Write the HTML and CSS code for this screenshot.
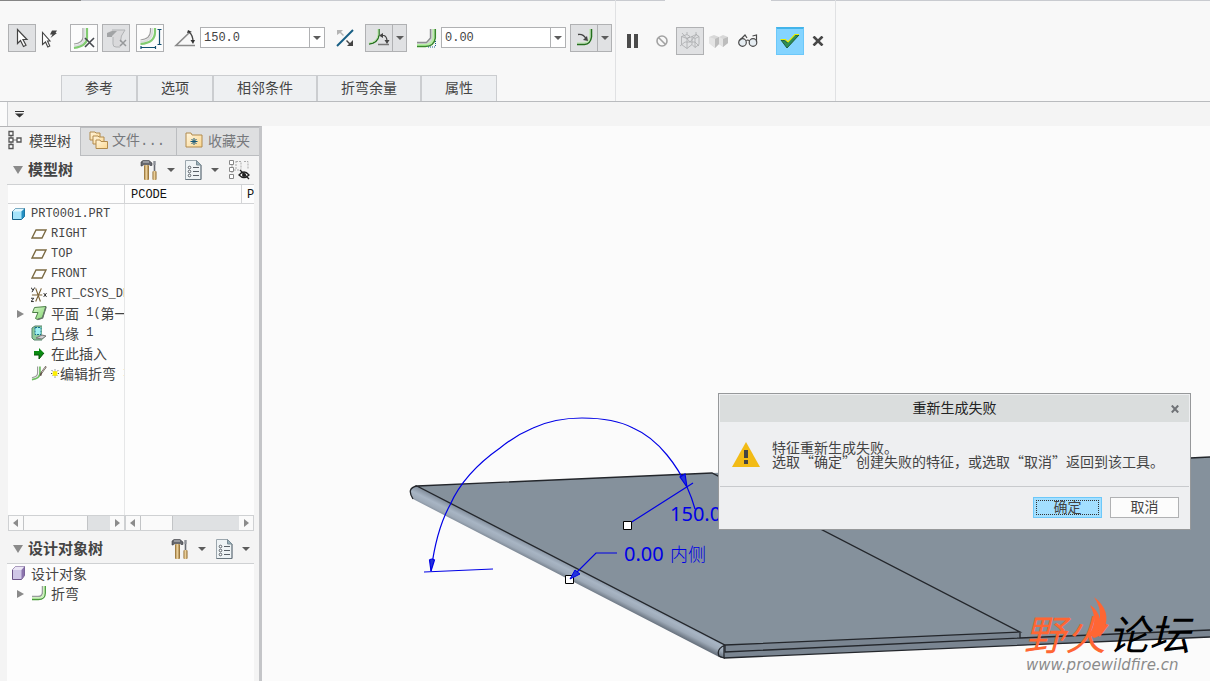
FILE: index.html
```html
<!DOCTYPE html>
<html lang="zh-CN">
<head>
<meta charset="utf-8">
<title>折弯</title>
<link rel="stylesheet" href="styles.css">
</head>
<body>
<svg class="defs" width="0" height="0" aria-hidden="true">
  <defs>
    <linearGradient id="wood" x1="0" x2="1"><stop offset="0" stop-color="#8a6428"/><stop offset=".45" stop-color="#f3d9a4"/><stop offset="1" stop-color="#8a6428"/></linearGradient>
    <linearGradient id="folder" x1="0" y1="0" x2="1" y2="1"><stop offset="0" stop-color="#fff6e0"/><stop offset="1" stop-color="#fbd78f"/></linearGradient>
    <linearGradient id="green" x1="0" y1="0" x2="1" y2="1"><stop offset="0" stop-color="#dcf8cf"/><stop offset="1" stop-color="#7fd46c"/></linearGradient>
    <symbol id="hammer" viewBox="0 0 18 20">
      <path d="M1 2 L3 .5 H9 L12 3 V5.500 H10 L9 4.500 H4 L2 6 H1 Z" fill="#66686e" stroke="#3c3e44" stroke-width=".6"/>
      <path d="M3 2h6" stroke="#c5c8ce"/>
      <rect x="4" y="5" width="5" height="15" rx="1" fill="url(#wood)"/>
      <path d="M14.500 1v11" stroke="#666a72" stroke-width="1.600"/><path d="M13.500 1h2v4h-2z" fill="#8c9097"/>
      <rect x="12.500" y="11" width="4" height="9" rx="1" fill="url(#wood)"/>
    </symbol>
    <symbol id="sheet" viewBox="0 0 17 20">
      <path d="M.5.5h11l4.500 4.500v14.500H.5z" fill="#eef3f5" stroke="#9ba6ad"/>
      <path d="M16 5v14.500H.5" fill="none" stroke="#68757e"/>
      <path d="M11.500.5 16 5h-4.500z" fill="#9ab1ba" stroke="#7b8d96"/>
      <path d="M8 7.500h6M8 11.500h6M8 15.500h6" stroke="#596067"/>
      <g fill="#fff" stroke="#596067"><circle cx="4.500" cy="7.500" r="1.300"/><circle cx="4.500" cy="11.500" r="1.300"/><circle cx="4.500" cy="15.500" r="1.300"/></g>
    </symbol>
    <symbol id="caret" viewBox="0 0 8 4"><path d="M0 0h8L4 4z" fill="#5c5c5c"/></symbol>
    <symbol id="plane" viewBox="0 0 16 16"><path d="M5 4h10l-4 8H1z" fill="none" stroke="#7b6a42" stroke-width="1.400"/></symbol>
    <symbol id="bend" viewBox="0 0 16 16">
      <path d="M11.500 1v6q0 4.500-4.500 4.500H1" fill="none" stroke="#9a9c9e" stroke-width="1.500"/>
      <path d="M13 1v6q0 6-6 6H1" fill="none" stroke="#c7f5b3" stroke-width="1.500"/>
      <path d="M14.300 1v7q0 6.500-7 6.500H1" fill="none" stroke="#4a9b3b" stroke-width="1.300"/>
    </symbol>
  </defs>
</svg>

<header class="ribbon">
  <div class="ribbon-group ribbon-group--feature">
    <div class="tools">
      <button class="tool tool--on" aria-label="选择"><svg width="26" height="26" viewBox="0 0 26 26"><path d="M8.500 4.500v14l3-3 3 6 2.500-1.300-3-5.700h4z" fill="#fff" stroke="#444" stroke-width="1.200"/></svg></button>
      <button class="glyph glyph--pick" aria-label="快速选择"><svg width="26" height="26" viewBox="0 0 26 26"><path d="M2.500 7.500v12l3-2.500 2.300 5 2-1-2.300-5H10z" fill="#fff" stroke="#444" stroke-width="1.100"/><path d="M12 5.500h5l-1.500 2.500H17l-6.500 5 2-3.500H10z" fill="#444"/></svg></button>
      <button class="tool" aria-label="折弯线外侧"><svg width="26" height="26" viewBox="0 0 26 26"><path d="M12 3v9q0 6-9 7" fill="none" stroke="#9c9c9c" stroke-width="1.200"/><path d="M13.500 3v10q0 7-10.500 8" fill="none" stroke="#dcdde0" stroke-width="1.800"/><path d="M16 3v10q0 8-13 10" fill="none" stroke="#82cb71" stroke-width="2.200"/><path d="M14 13l9 9M23 13l-9 9" stroke="#46494e" stroke-width="1.600"/></svg></button>
      <button class="tool tool--on" aria-label="固定侧" disabled><svg width="26" height="26" viewBox="0 0 26 26"><path d="M9 5h13q-6 6-4 17h-6q-2-3-2-10H4V8z" fill="#d9d9db"/><path d="M9 5h13q-5 6-4.500 12M10 12v7q0 3 3 3h4" fill="none" stroke="#b0b2b4"/><path d="M4 8l5-2h5l-5 5v1H4z" fill="#a2a4a6"/><path d="M17 15l6 6M23 15l-6 6" stroke="#96989a" stroke-width="1.500"/></svg></button>
      <button class="tool tool--apart" aria-label="标注折弯"><svg width="26" height="26" viewBox="0 0 26 26"><path d="M13.500 3v3q0 8-10 9" fill="none" stroke="#9c9c9c" stroke-width="1.200"/><path d="M15.300 3v3q0 10-12 11" fill="none" stroke="#dadbdc" stroke-width="1.800"/><path d="M18 3v4q0 11-14.500 12" fill="none" stroke="#82cb71" stroke-width="2.200"/><path d="M20.500 4.500h4M22.500 4v15M20.500 19.500h4M4 21v3M4 22.500h15M18.500 21v3" stroke="#114e70" stroke-width="1.200"/></svg></button>
      <label class="glyph glyph--angle" for="angle" title="角度"><svg width="22" height="20" viewBox="0 0 22 20"><path d="M16 4 2 17.500h19" fill="none" stroke="#8b8b8b" stroke-width="1.600"/><path d="M15 4q4 3 4 10" fill="none" stroke="#444" stroke-width="1.300"/><path d="M13 5l1-3 4 2zM16.500 12h4.500l-2 4z" fill="#333"/></svg></label>
      <div class="combo"><input id="angle" type="text" value="150.0"><button aria-label="角度列表"><svg width="8" height="4"><use href="#caret"/></svg></button></div>
      <button class="glyph glyph--flip" aria-label="反向"><svg width="18" height="18" viewBox="0 0 18 18"><path d="M1 17 17 1" stroke="#175e84" stroke-width="2"/><path d="M1 1h6L5 3l3 3-1 1-3-3-3 2z" fill="#b5b5b5"/><path d="M17 17h-6l2-2-3-3 1-1 3 3 3-3z" fill="#444"/></svg></button>
      <div class="split"><button aria-label="内部角度"><svg width="26" height="26" viewBox="0 0 26 26"><path d="M13 4v6q-1 8-10 9" fill="none" stroke="#236f1c" stroke-width="1.500"/><path d="M12 4v6q-1 7-9 8" fill="none" stroke="#b8e9a8"/><path d="M12 19.500h11" stroke="#777" stroke-width="1.500"/><path d="M15 10.500h3q3 1 3 6" fill="none" stroke="#444" stroke-width="1.200"/><path d="M13 10.500l4-2.500v5zM18.500 15h5l-2.500 4z" fill="#444"/></svg></button><button class="split-arrow" aria-label="角度选项"><svg width="8" height="4"><use href="#caret"/></svg></button></div>
      <label class="glyph glyph--radius" for="radius" title="半径"><svg width="20" height="20" viewBox="0 0 20 20"><path d="M14 1v9l-4 5H0v3h10q8-1 8-9V1z" fill="#d5d6d7"/><path d="M13.500 1v9l-4 4.500H0" fill="none" stroke="#8b8d8f" stroke-width="1.400"/><path d="M16.500 1v9q-1 6-8 7H0" fill="none" stroke="#b7f0a4" stroke-width="1.800"/><path d="M18.300 1v9q-1 8-10 8.500H0" fill="none" stroke="#388a2a" stroke-width="1.500"/><path d="M11 19h8M18.500 13v6" stroke="#175e84" stroke-dasharray="1 1"/></svg></label>
      <div class="combo"><input id="radius" type="text" value="0.00"><button aria-label="半径列表"><svg width="8" height="4"><use href="#caret"/></svg></button></div>
      <div class="split"><button aria-label="内侧半径"><svg width="26" height="26" viewBox="0 0 26 26"><path d="M19 4v7q0 6-6 7H6" fill="none" stroke="#b8e9a8" stroke-width="1.200"/><path d="M20.500 4v8q-1 7-7 7.500H6" fill="none" stroke="#236f1c" stroke-width="1.500"/><path d="M7 9.500q5-1 8 4" fill="none" stroke="#444" stroke-width="1.300"/><path d="M17 16l-5-1 4-4z" fill="#444"/></svg></button><button class="split-arrow" aria-label="半径选项"><svg width="8" height="4"><use href="#caret"/></svg></button></div>
    </div>
    <nav class="ribbon-tabs">
      <button>参考</button><button>选项</button><button>相邻条件</button><button>折弯余量</button><button>属性</button>
    </nav>
  </div>
  <div class="ribbon-group ribbon-group--control">
    <button class="glyph glyph--control" aria-label="暂停"><svg width="12" height="14"><path d="M0 0h4v14H0zM7 0h4v14H7z" fill="#4b4b4b"/></svg></button>
    <button class="glyph glyph--control" aria-label="无预览"><svg width="12" height="12" viewBox="0 0 12 12"><circle cx="6" cy="6" r="5" fill="none" stroke="#a2a2a2" stroke-width="1.600"/><path d="M2.500 2.500l7 7" stroke="#a2a2a2" stroke-width="1.600"/></svg></button>
    <button class="tool tool--on" aria-label="分离"><svg width="22" height="20" viewBox="0 0 22 20"><path d="M2.500 5.500 8 3.500l3 2-3 2zM2.500 5.500v8l5.500 4v-10M8 17.500l5-4v-8l-5 2M13 5.500l4-2 3 2-4 2zM16 7.500v9l-3-3M16 16.500l4-3v-8M1 15l5-4h5l7-8M3 2l8 9h5l4 4M8 3.500V1M17 3.500V1" fill="none" stroke="#a9abad" stroke-width=".8"/></svg></button>
    <button class="glyph glyph--control glyph--verify" aria-label="连接"><svg width="19" height="16" viewBox="0 0 19 16"><path d="M0 4l5-2 5 2 4-2 5 2v6l-5 4-4-3-4 4-6-5z" fill="#d8d8d8"/><path d="M6 6l4-2v7l-4 4zM14 6l5-2v6l-5 4z" fill="#bdbdbd"/><path d="M0 4l6 2v9l-6-5zM10 4l4 2v8l-4-3z" fill="#e4e4e4"/></svg></button>
    <button class="glyph glyph--control" aria-label="预览"><svg width="20" height="14" viewBox="0 0 20 14"><g fill="#e6edf2" stroke="#4a4a4a" stroke-width="1.200"><circle cx="4.500" cy="8.500" r="3.800"/><circle cx="15" cy="8.500" r="3.800"/></g><path d="M1 7 7 1l2 3M8.500 7q1-2 3 0M18.500 8V1l-4 1" fill="none" stroke="#4a4a4a" stroke-width="1.200"/></svg></button>
    <button class="tool tool--ok" aria-label="确认特征"><svg width="22" height="18" viewBox="0 0 22 18"><path d="M2 8l5 1 1 2 8-8h4L8 16z" fill="#2d8f58" stroke="#205e38"/><path d="M1.500 7.500h5L9 10l7-7.500h4" fill="none" stroke="#e8ee00" stroke-width="1.200"/></svg></button>
    <button class="glyph glyph--cancel" aria-label="取消特征"><svg width="12" height="10" viewBox="0 0 12 10"><path d="M1.500.5l9 9M10.500.5l-9 9" stroke="#484848" stroke-width="2.600"/></svg></button>
  </div>
</header>

<div class="quickbar"><button aria-label="更多命令"><svg width="9" height="7"><path d="M0 0h9v1H0zM0 2.500h9l-4.500 4z" fill="#333"/></svg></button></div>

<main class="workspace">
  <aside class="navigator">
    <nav class="nav-tabs">
      <button class="nav-tab nav-tab--active"><svg width="14" height="20" viewBox="0 0 14 20"><path d="M3 6v8M5 10h4" stroke="#777"/><g fill="#fff" stroke="#555" stroke-width="1.300"><path d="M1 1.500h4v4H1zM1 8h4v4H1zM9 8h4v4H9zM1 14.500h4v4H1z"/></g></svg>模型树</button>
      <button class="nav-tab"><svg width="20" height="20" viewBox="0 0 20 20"><g fill="url(#folder)" stroke="#b18a4c"><path d="M1 10V2h5l1 1h4v7z"/><path d="M4 14V6h5l1 1h5v7z"/><path d="M7 18.500V10h4l1 1.500h6.500v7z"/></g></svg><span>文件<span class="code code--tab">...</span></span></button>
      <button class="nav-tab"><svg width="18" height="16" viewBox="0 0 18 16"><path d="M1 15V1h5l1 2h10v12z" fill="url(#folder)" stroke="#b18a4c"/><path d="M9 6v7M5.500 9.500h7M6.500 7l5 5M11.500 7l-5 5" stroke="#155678"/></svg>收藏夹</button>
    </nav>

    <section class="panel">
      <div class="panel-head">
        <svg class="fold" width="10" height="8"><path d="M0 0h10L5 8z" fill="#8a8a8a"/></svg>
        <h2>模型树</h2>
        <button aria-label="设置"><svg width="18" height="20"><use href="#hammer"/></svg><svg width="8" height="4"><use href="#caret"/></svg></button>
        <button aria-label="显示"><svg width="17" height="20"><use href="#sheet"/></svg><svg width="8" height="4"><use href="#caret"/></svg></button>
        <button aria-label="隐藏"><svg width="21" height="20" viewBox="0 0 21 20"><path d="M3 5v9M5 10h5M7 1.500h5v8M15 1.500h4v8M7 1v8" fill="none" stroke="#aaa" stroke-dasharray="2 1"/><g fill="#fff" stroke="#888"><path d="M.5.5h4v4h-4zM.5 7.500h4v4h-4zM.5 14.500h4v4h-4z"/></g><path d="M10 15q5-6 10 0-5 5-10 0z" fill="#fff" stroke="#222" stroke-width="1.300"/><circle cx="15" cy="15" r="2" fill="#222"/><path d="M11 10l9 9" stroke="#222" stroke-width="1.300"/></svg></button>
      </div>
      <div class="columns">
        <div class="column column--name">
          <div class="column-head"></div>
          <ul class="tree">
            <li class="root"><svg width="16" height="16" viewBox="0 0 16 16"><path d="M1.500 5.500l3-3h9v8l-3 3h-9z" fill="#a5e4fb" stroke="#155f86"/><path d="M1.500 5.500l3-3h9l-3 3z" fill="#e1f7ff"/><path d="M10.500 5.500l3-3v8l-3 3z" fill="#258fc2"/></svg><span class="code">PRT0001.PRT</span></li>
            <li><svg width="16" height="16"><use href="#plane"/></svg><span class="code">RIGHT</span></li>
            <li><svg width="16" height="16"><use href="#plane"/></svg><span class="code">TOP</span></li>
            <li><svg width="16" height="16"><use href="#plane"/></svg><span class="code">FRONT</span></li>
            <li><svg width="16" height="17" viewBox="0 0 17 17"><path d="M1 9h11M5 2l5 14M11 2 5 16" stroke="#7b6235" stroke-width="1.200"/><path d="M0 1l2 3M4 1 1 6M0 12.500h3L0 16h3M13.500 7l3 4M16.500 7l-3 4" fill="none" stroke="#222"/></svg><span class="code">PRT_CSYS_DEF</span></li>
            <li class="branch local"><svg width="16" height="16" viewBox="0 0 16 16"><path d="M3.500 2.500 15 1.500 11.500 13l-5 1.500-2-1 2.500-6H1.500z" fill="url(#green)" stroke="#4c8046"/><path d="M15 2l-3.500 11-5 1.500" fill="none" stroke="#66756a" stroke-width="1.500"/></svg>平面<span class="code">&nbsp;1(</span>第一个</li>
            <li class="local"><svg width="16" height="16" viewBox="0 0 16 16"><path d="M1 3l3-2h7v9l4 1-4 4H3l-2-2z" fill="#8fcb9b"/><path d="M11 1H4L1 3v10l2 2h8" fill="none" stroke="#55806a"/><path d="M4 2.500h6v7H4z" fill="#9ef0f0" stroke="#166e8e" stroke-dasharray="2 1"/><path d="M5 13l6-3 4 1-4 3z" fill="#cfcfd2" stroke="#777"/></svg>凸缘<span class="code">&nbsp;1</span></li>
            <li class="local"><svg width="16" height="16" viewBox="0 0 16 16"><path d="M3 6h5V3l5 5-5 6v-4H3z" fill="#0a8b12"/><path d="M3 10h5v4l5-6" fill="none" stroke="#074c07"/></svg>在此插入</li>
            <li class="local"><svg width="16" height="16" viewBox="0 0 17 16"><path d="M7 1v7q0 4-6 5" fill="none" stroke="#999" stroke-width="1.200"/><path d="M9.500 1v7q0 6-8.500 7" fill="none" stroke="#70bd63" stroke-width="1.800"/><path d="M16 1l-5 7-1 3" fill="none" stroke="#5d4e43" stroke-width="1.800"/><path d="M15.500 1.500l-4 6" stroke="#eee" stroke-width=".7"/></svg><svg class="star" width="8" height="9" viewBox="0 0 9 9"><path d="M4.500 0v9M0 4.500h9M1 1l7 7M8 1 1 8" stroke="#222" stroke-dasharray="1 1"/><path d="M2 2h5v5H2z" fill="#fff000"/></svg>编辑折弯<span class="code">&nbsp;1</span></li>
          </ul>
          <div class="scrollbar"><i class="arrow arrow--left"></i><span class="thumb thumb--wide"></span><i class="arrow"></i></div>
        </div>
        <div class="column">
          <div class="cells">
            <div class="cell"><div class="column-head code">PCODE</div></div>
            <div class="cell cell--last"><div class="column-head code">P</div></div>
          </div>
          <div class="scrollbar"><i class="arrow arrow--left"></i><span class="thumb"></span><i class="arrow"></i></div>
        </div>
      </div>
    </section>

    <section class="panel panel--design">
      <div class="panel-head">
        <svg class="fold" width="10" height="8"><path d="M0 0h10L5 8z" fill="#8a8a8a"/></svg>
        <h2>设计对象树</h2>
        <button aria-label="设置"><svg width="18" height="20"><use href="#hammer"/></svg><svg width="8" height="4"><use href="#caret"/></svg></button>
        <button aria-label="显示"><svg width="17" height="20"><use href="#sheet"/></svg><svg width="8" height="4"><use href="#caret"/></svg></button>
      </div>
      <ul class="tree">
        <li class="root local"><svg width="16" height="16" viewBox="0 0 16 16"><path d="M1.500 5l3-3.500h9v9l-3 4h-9z" fill="#cfc6e6" stroke="#6b5387"/><path d="M1.500 5l3-3.500h9L10.500 5z" fill="#ebe6f6"/><path d="M10.500 5l3-3.500v9l-3 4z" fill="#8b74ad"/></svg>设计对象</li>
        <li class="branch local"><svg width="16" height="16"><use href="#bend"/></svg>折弯</li>
      </ul>
    </section>
  </aside>

  <section class="canvas">
    <svg class="scene" viewBox="262 126 948 555" role="img" aria-label="钣金折弯模型">
      <defs>
        <linearGradient id="tube" gradientUnits="userSpaceOnUse" x1="568" y1="563" x2="561" y2="577"><stop offset="0" stop-color="#8692a0"/><stop offset=".35" stop-color="#a8b5c4"/><stop offset=".65" stop-color="#9da9b7"/><stop offset="1" stop-color="#68727e"/></linearGradient>
      </defs>
      <path d="M712 473 1190 458 1210 457V637L724 658V645L417 486z" fill="#85919c"/>
      <path d="M725 645 1020 632V638L1210 630V637L724 658z" fill="#7a8591"/>
      <path d="M417 486 725 645V658H721L413 499Q406 488 417 486z" fill="url(#tube)"/>
      <g fill="none" stroke="#23262b" stroke-width="1.300">
        <path d="M417 486 712 473 1020 632 725 645zM725 645V652L1020 638V632M1020 638 1210 630M724 658 1210 637M1080 461.500 1190 458 1210 457"/>
        <path d="M413 499Q406 488 417 486M725 645Q716 649 719 656L724 658V645"/>
      </g>
      <g fill="none" stroke="#0000e6" stroke-width="1.200">
        <path d="M431 571C434 548 440 523 450 505C461 480 480 462 500 448C510 440 521 433 533 428C548 421 565 418 582 418C600 418 618 420 633 428C647 434 658 444 667 455C676 466 682 476 687 487Q692 498 695 509"/>
        <path d="M424 572 493 569M627 525 693 483M570 579 596 553H617"/>
        <path d="M431 571 429.500 560Q432 558 434.500 560zM687 487 680 477 685 474z" fill="#2434d8"/>
      </g>
      <path d="M623.500 521.500h8v8h-8zM565.500 575.500h8v8h-8z" fill="#fff" stroke="#000"/>
      <path d="M570 579 575 570 580 574z" fill="#2434d8" stroke="#0000e6"/>
      <text class="dimension" x="670" y="521">150.0</text>
      <text class="dimension" x="624" y="561">0.00 <tspan class="dimension-note" x="670">内侧</tspan></text>
      <text class="brand" x="1024" y="650"><tspan class="brand-fire">野火</tspan><tspan x="1108">论坛</tspan></text>
      <path d="M1094 597Q1112 611 1104 629Q1100 637 1094 638L1089 634Q1099 622 1090 605Q1098 610 1100 619Q1101 607 1094 597z" fill="#ff6633"/>
      <text class="brand-url" x="1026" y="670">www.proewildfire.cn</text>
    </svg>

    <div class="dialog" role="dialog" aria-labelledby="dialog-title">
      <div class="dialog-head">
        <h1 id="dialog-title">重新生成失败</h1>
        <button aria-label="关闭"><svg width="8" height="8" viewBox="0 0 8 8"><path d="M.8.5l6.400 7M7.200.5l-6.400 7" stroke="#707377" stroke-width="2"/></svg></button>
      </div>
      <div class="dialog-body">
        <svg width="28" height="25" viewBox="0 0 28 25"><path d="M14 0 28 25H0z" fill="#f2bb16"/><path d="M12 8h4v8h-4zM12 18h4v4h-4z" fill="#444"/></svg>
        <p>特征重新生成失败。<br>选取“确定”创建失败的特征，或选取“取消”返回到该工具。</p>
      </div>
      <div class="dialog-foot">
        <button class="primary">确定</button>
        <button>取消</button>
      </div>
    </div>
  </section>
</main>
</body>
</html>
```
FILE: styles.css
```css
* { box-sizing: border-box; }

body {
  margin: 0;
  height: 100vh;
  display: flex;
  flex-direction: column;
  overflow: hidden;
  background: #fbfbfb;
  color: #444;
  font: 14px/20px "Noto Sans CJK SC", sans-serif;
}

button {
  margin: 0;
  padding: 0;
  border: 0;
  background: none;
  color: inherit;
  font: inherit;
  display: flex;
  align-items: center;
  justify-content: center;
}

svg { display: block; flex: none; }
h1, h2, p, ul { margin: 0; padding: 0; }
ul { list-style: none; }
.defs { position: absolute; }
.code { font-family: "Liberation Mono", monospace; font-size: 12px; }
.code--tab { font-size: 14px; }

/* Ribbon */
.ribbon {
  display: flex;
  background: linear-gradient(90deg, #858585 81px, #c9cbd0 81px 665px, #f8f8f8 665px 771px, #c9cbd0 771px) top / 100% 1px no-repeat #f8f8f8;
  border-bottom: 1px solid #b9bbbe;
}
.ribbon-group { border-right: 1px solid #e0e1e3; }
.ribbon-group--feature { width: 616px; }
.tools { display: flex; align-items: center; gap: 4px; height: 75px; padding-left: 8px; }
.tool {
  width: 28px;
  height: 28px;
  border: 1px solid #b0b1b3;
  background: #fcfcfc;
}
.tool--on { background: #e0e1e3; }
.tool--apart { margin-left: 2px; }
.tool--ok { background: #84d4ff; border-color: #6cc8fa; border-top: 2px solid #43b4ea; }
.glyph { display: flex; align-items: center; justify-content: center; }
.glyph--pick { width: 26px; }
.glyph--angle { width: 28px; justify-content: flex-end; }
.glyph--flip { width: 32px; }
.glyph--radius { width: 26px; justify-content: flex-end; }
.combo {
  display: flex;
  width: 125px;
  height: 21px;
  border: 1px solid #b0b1b3;
  background: #fff;
}
.combo input {
  flex: 1;
  min-width: 0;
  border: 0;
  padding: 0 3px;
  background: none;
  color: #444;
  font: 12px "Liberation Mono", monospace;
}
.combo button { width: 15px; border-left: 1px solid #b0b1b3; }
.split { display: flex; width: 42px; height: 28px; border: 1px solid #b0b1b3; background: #e0e1e3; }
.split button { flex: 1; }
.split .split-arrow { flex: 0 0 14px; border-left: 1px solid #b0b1b3; }
.ribbon-tabs { display: flex; margin-left: 61px; }
.ribbon-tabs button {
  height: 26px;
  padding: 0 23px 4px;
  border: 1px solid #cbcdd0;
  border-bottom: 0;
  background: #eef0f2;
}
.ribbon-group--control { display: flex; align-items: center; width: 220px; height: 101px; padding: 0 0 20px 2px; }
.glyph--control { width: 29px; }
.tool--ok { margin-left: 14px; }
.glyph--cancel { width: 28px; }

.quickbar {
  display: flex;
  height: 24px;
  margin-left: 7px;
  padding-left: 7px;
  border-left: 1px solid #cbcdd0;
  background: #f4f4f4;
}

/* Navigator */
.workspace { flex: 1; display: flex; min-height: 0; }
.navigator {
  flex: none;
  display: flex;
  flex-direction: column;
  width: 262px;
  border-right: 3px solid #c4c5c8;
  border-top: 1px solid #b4b4b6;
  background: #f4f4f4;
}
.nav-tabs { display: grid; grid-template-columns: 80px 96px 1fr; height: 29px; }
.nav-tab {
  justify-content: flex-start;
  gap: 3px;
  padding: 0 0 3px 8px;
  border: 1px solid #bbbdc0;
  border-width: 1px 0 1px 1px;
  background: #dedfe0;
  color: #77797c;
}
.nav-tab--active { gap: 7px; border: 0; background: #f4f4f4; color: #444; }
.nav-tab:last-child { gap: 5px; }
.panel { display: flex; flex-direction: column; }
.panel-head {
  display: flex;
  align-items: center;
  gap: 10px;
  height: 29px;
  margin: 0 5px 0 7px;
  padding: 0 4px 0 6px;
  border-bottom: 1px solid #cfd1d3;
}
.panel-head h2 { flex: 1; padding-bottom: 2px; font-size: 15px; line-height: 20px; font-weight: 700; }
.fold { margin-right: -5px; }
.panel-head button { gap: 9px; }
.columns { display: grid; grid-template-columns: 117px 1fr; margin: 0 5px 0 8px; height: 346px; background: #fdfdfd; }
.column { display: flex; flex-direction: column; min-width: 0; }
.column--name .tree { border-right: 1px solid #e6e7e8; }
.column-head { height: 19px; padding-left: 6px; border-bottom: 1px solid #d3d4d6; color: #111; line-height: 20px; }
.column--name .column-head { border-right: 1px solid #d3d4d6; }
.cells { flex: 1; display: grid; grid-template-columns: 116px 1fr; overflow: hidden; }
.cell--last .column-head { border-left: 1px solid #d3d4d6; padding-left: 5px; }
.tree { flex: 1; overflow: hidden; }
.tree li { position: relative; display: flex; align-items: center; height: 20px; padding-left: 23px; white-space: nowrap; }
.tree .local { padding-bottom: 2px; }
.tree li > svg:first-child { margin-right: 4px; }
.tree .root { padding-left: 3px; }
.branch::before {
  content: "";
  position: absolute;
  left: 9px;
  top: 6px;
  border: solid transparent;
  border-width: 4px 0 4px 7px;
  border-left-color: #8a8a8a;
}
.star { margin-right: 1px; }
.scrollbar { display: flex; height: 16px; border: 1px solid #cfd1d3; background: #dfe1e3; }
.arrow { display: grid; place-items: center; width: 14px; background: #fafafa; margin-left: auto; }
.arrow::before { content: ""; border: solid transparent; border-width: 4px 0 4px 5px; border-left-color: #8c8c8c; }
.arrow--left { margin-left: 0; transform: rotate(180deg); }
.thumb { width: 33px; border: solid #c2c4c6; border-width: 0 1px; background: #fafafa; }
.thumb--wide { width: 65px; }
.panel--design { flex: 1; padding-top: 3px; }
.panel--design .panel-head { height: 30px; }
.panel--design .tree { margin: 0 5px 0 7px; padding-left: 1px; background: #fdfdfd; }

/* Graphics area */
.canvas { position: relative; flex: 1; min-width: 0; overflow: hidden; }
.scene { width: 100%; height: auto; }
.dimension { fill: #0000e6; font: 20px "Noto Sans", sans-serif; }
.dimension-note { font: 300 18px "Noto Sans CJK SC", sans-serif; }
.brand { font: italic 400 41px "Noto Sans CJK SC", sans-serif; fill: #000; }
.brand-fire { fill: #ff6633; }
.brand-url { font: italic 15px "DejaVu Sans", sans-serif; fill: #8b8b8b; }

.dialog {
  position: absolute;
  left: 456px;
  top: 267px;
  width: 473px;
  border: 1px solid #96989a;
  background: #eeeff1;
  padding: 1px;
}
.dialog-head { display: grid; grid-template-columns: 28px 1fr 28px; height: 27px; background: #dadddd; color: #222; }
.dialog-head h1 { grid-column: 2; font-size: 14px; font-weight: 400; line-height: 24px; text-align: center; }
.dialog-body { display: flex; align-items: center; gap: 12px; height: 65px; padding: 0 12px; border-bottom: 1px solid #c8cacd; }
.dialog-body p { line-height: 14px; }
.dialog-foot { display: flex; justify-content: flex-end; gap: 8px; padding: 10px; }
.dialog-foot button { width: 69px; height: 21px; padding-bottom: 3px; border: 1px solid #b0b1b3; background: #fcfcfc; }
.dialog-foot .primary { border-color: #6cc8fa; background: #a3dfff; outline: 1px dotted #333; outline-offset: -4px; }
```
